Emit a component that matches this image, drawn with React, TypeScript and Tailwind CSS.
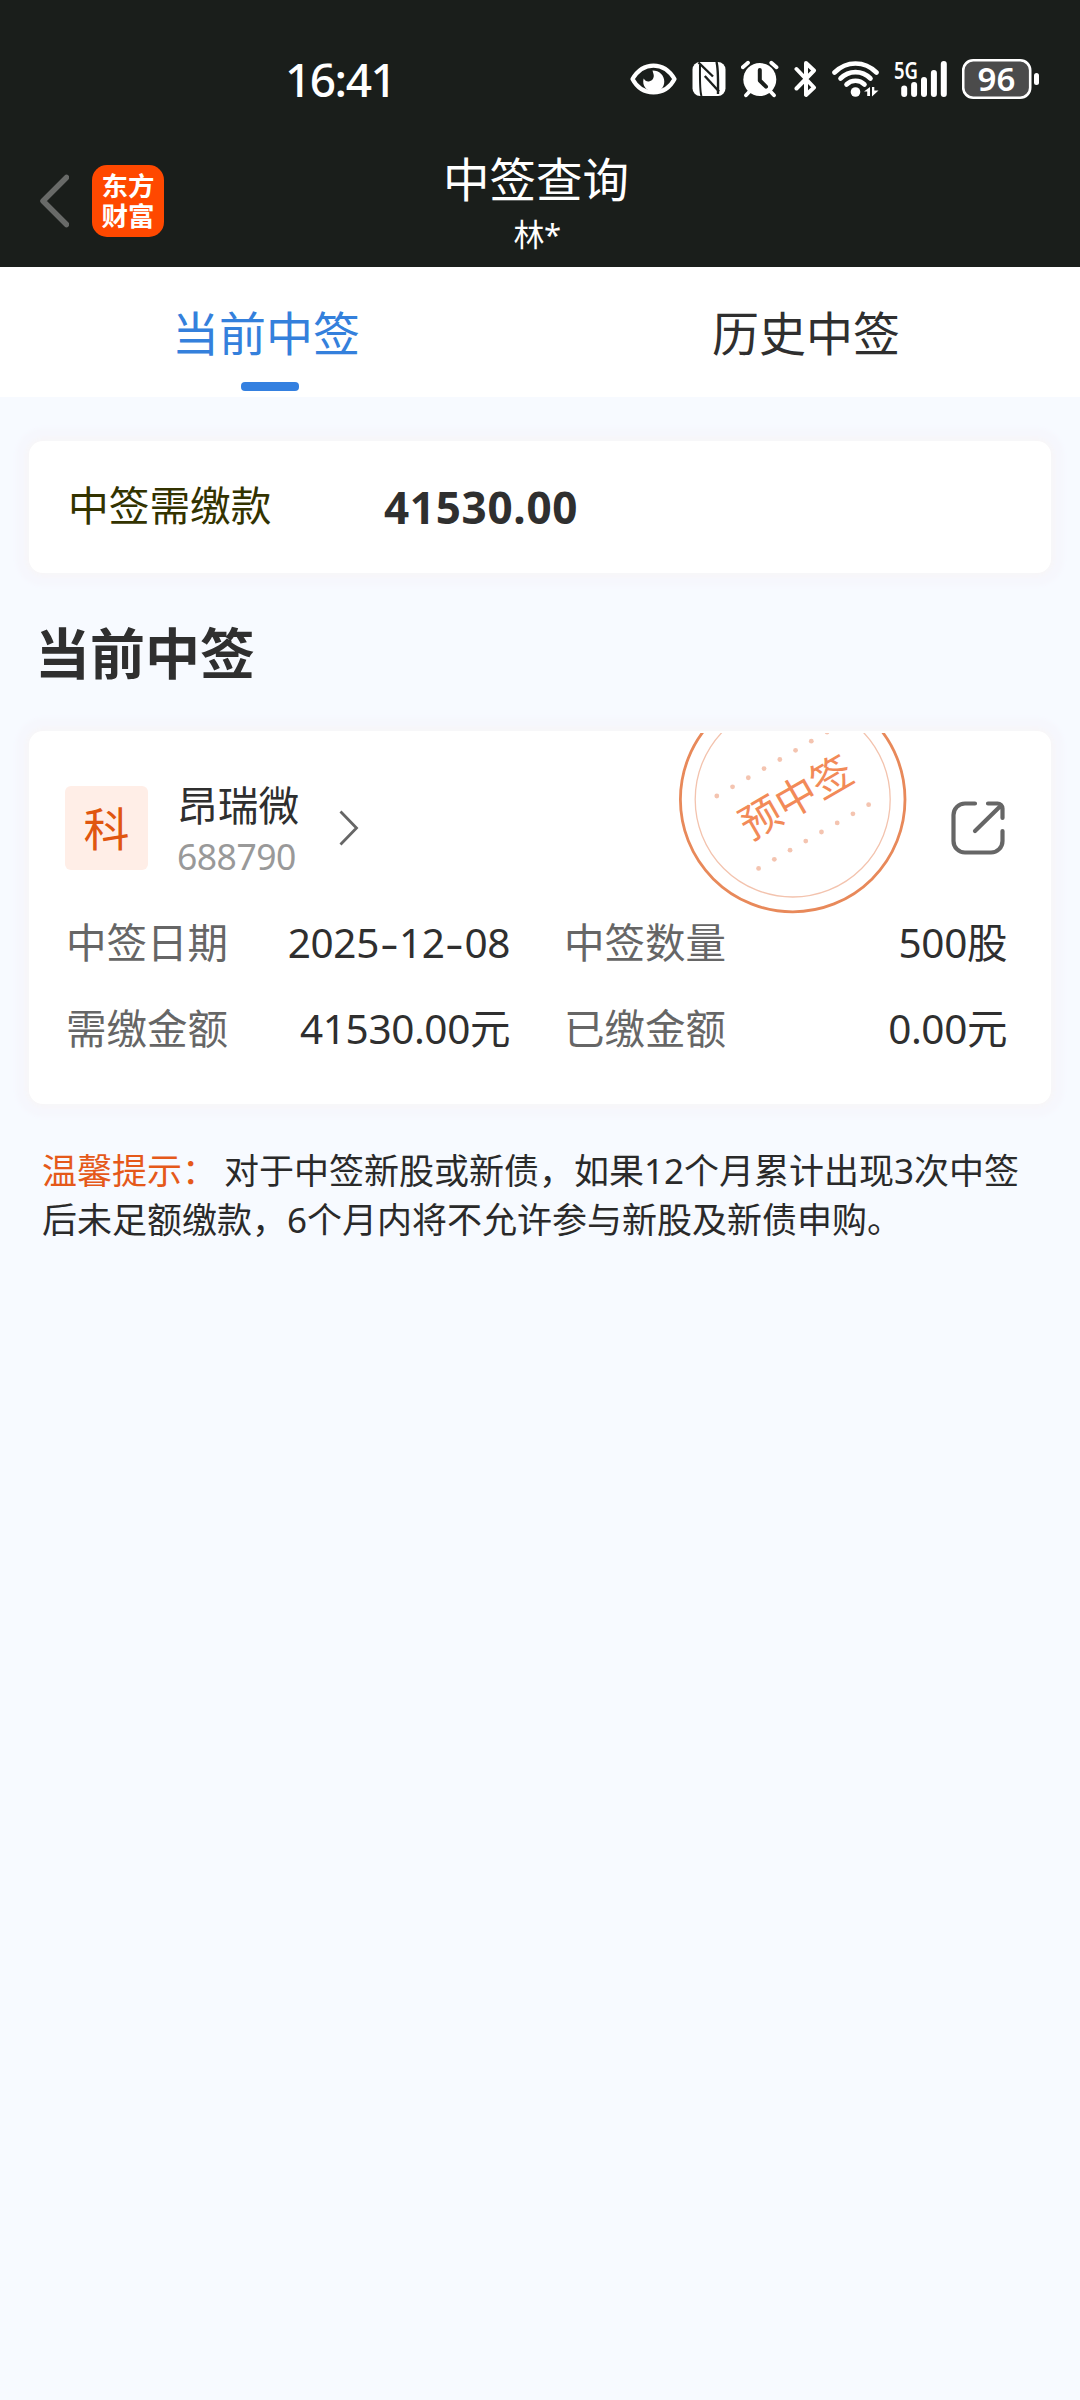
import type { ReactNode } from 'react'

const CARD = 'mx-[29px] rounded-[14px] bg-white shadow-[0_0_6px_2px_#f8f6f6,0_0_4px_13px_#f6f7fd]'

function EyeIcon() {
  return (
    <svg width="47" height="44" viewBox="0 0 48 44" fill="none">
      <path d="M2.500 22C7 14.500 14.500 8.300 24 8.300S41 14.500 45.500 22C41 30.500 33.500 35.700 24 35.700S7 30.500 2.500 22Z" stroke="#fff" strokeWidth="4.200" strokeLinejoin="round" />
      <path d="M23 13.200c7 0 12 5 12 11.300 0 6.500-4.500 10.500-10.500 10.500-6.500 0-11-4.500-11-10.500 0-1 .2-2 .5-3 1.200 2.300 3.200 3.300 5.300 3 4-.5 5.700-4.200 4.700-7.500-.3-1.500-.8-2.800-1-3.800Z" fill="#fff" />
    </svg>
  )
}

function NfcIcon() {
  return (
    <svg width="34" height="44" viewBox="0 0 34 44">
      <rect x="0.500" y="5" width="33" height="34" rx="7.500" fill="#fff" />
      <g fill="none" stroke="#1a1e1b" strokeWidth="2.400">
        <path d="M9.500 39C7.500 34 8 14 8 8" strokeWidth="2" />
        <path d="M6.500 5.500L21 19.500" />
        <path d="M12.800 19L27 34.500" />
        <path d="M24.500 5C26.500 12 26 28 26 37" />
      </g>
    </svg>
  )
}

function AlarmIcon() {
  return (
    <svg width="38" height="44" viewBox="0 0 38 44" fill="none">
      <circle cx="18.800" cy="22.500" r="16.500" fill="#fff" />
      <path d="M1.800 10.200L7 5.800M35.500 10.200L30.300 5.800M5 38.300L9 34M33 38.300L29 34" stroke="#fff" strokeWidth="3.800" strokeLinecap="round" />
      <path d="M18.800 13v10.500l6.200 6.200" stroke="#1a1e1b" strokeWidth="4" strokeLinecap="round" strokeLinejoin="round" />
    </svg>
  )
}

function BluetoothIcon() {
  return (
    <svg width="23" height="44" viewBox="0 0 23 44" fill="none">
      <path d="M2.500 12L20 30.500 12 38V6l8 7.500L2.500 31.500" stroke="#fff" strokeWidth="4" strokeLinecap="round" strokeLinejoin="round" />
    </svg>
  )
}

function WifiIcon() {
  return (
    <svg width="47" height="44" viewBox="0 0 47 44" fill="none">
      <g stroke="#fff" strokeWidth="4.600" strokeLinecap="round">
        <path d="M2.500 15.500C14.500 3.500 32.500 3.500 44.500 15.500" />
        <path d="M8.500 21.500C17 13 30 13 38.500 21.500" />
        <path d="M14.500 27.500C19.500 22.500 27.500 22.500 32.500 27.500" />
      </g>
      <circle cx="23.500" cy="35" r="4.800" fill="#fff" />
      <path d="M38 30v9h-2.800v-4.500H32L38 30ZM40 30h2.300v3.500h4.200L40 39.500V30Z" fill="#fff" />
    </svg>
  )
}

function SignalIcon() {
  const tops = [28.5, 25, 20, 13, 4]
  return (
    <svg className="overflow-visible" width="53" height="44" viewBox="0 0 53 44" fill="#fff">
      <text x="0" y="22" fontSize="23" fontWeight="600" textLength="24" lengthAdjust="spacingAndGlyphs">5G</text>
      {tops.map((y, i) => (
        <rect key={i} x={7.2 + i * 9.9} y={y} width="6" height={40 - y} rx="3" />
      ))}
    </svg>
  )
}

function BatteryIcon() {
  return (
    <svg width="77" height="44" viewBox="0 0 77 44">
      <rect x="1.200" y="3.300" width="67" height="37.400" rx="10" fill="#4b4b4b" stroke="#fff" strokeWidth="2.600" />
      <rect x="72" y="16" width="5" height="12" rx="2.500" fill="#fff" />
      <text x="34.500" y="34.200" fontSize="33" fontWeight="600" textAnchor="middle" fill="#fff">96</text>
    </svg>
  )
}

// round "预中签" stamp, the top is cut off by the card edge
function Stamp() {
  const dots = Array.from({ length: 8 }, (_, i) => i)
  return (
    <svg className="absolute left-[649px] top-[2px]" width="230" height="184" viewBox="678 733 230 184" fill="none">
      <circle cx="792.700" cy="799.500" r="112.300" stroke="#e8895a" strokeWidth="2.800" />
      <circle cx="792.700" cy="799.500" r="97.500" stroke="#f3c3ae" strokeWidth="1.300" />
      {dots.map(i => (
        <g key={i} fill="#f4c4b0">
          <circle cx={716.8 + i * 15.75} cy={796 - i * 9.13} r="2.400" />
          <circle cx={758.6 + i * 15.72} cy={868.4 - i * 9.1} r="2.400" />
        </g>
      ))}
      <text x="796.200" y="812.500" fontSize="41" textAnchor="middle" fill="#f28a58" transform="rotate(-30 795.7 797.7)">预中签</text>
    </svg>
  )
}

function ShareIcon() {
  return (
    <svg width="54" height="54" viewBox="0 0 54 54" fill="none" stroke="#666" strokeWidth="4.200" strokeLinecap="round" strokeLinejoin="round">
      <path d="M24 2.500H14A11.500 11.500 0 0 0 2.500 14v26A11.500 11.500 0 0 0 14 51.500h26A11.500 11.500 0 0 0 51.500 40V30" />
      <path d="M37 2.500h9.500a5 5 0 0 1 5 5V17M49.500 5L24 30" />
    </svg>
  )
}

function Tab({ label, active }: { label: string; active?: boolean }) {
  return (
    <div className="flex flex-1 flex-col items-center pt-[36px]">
      <span className={`-ml-[8px] text-[47px] leading-[60px] ${active ? 'text-[#3480dc]' : 'text-[#2f2f2f]'}`}>{label}</span>
      {active && <span className="mt-[19px] h-[9px] w-[58px] rounded-[4px] bg-[#3480e0]" />}
    </div>
  )
}

function Field({ label, children }: { label: string; children: ReactNode }) {
  return (
    <div className="flex items-center justify-between whitespace-nowrap text-[40.500px] leading-[50px]">
      <span className="text-[#666]">{label}</span>
      <span className="tracking-[-0.400px] text-[#2f2f2f]">{children}</span>
    </div>
  )
}

function Dash() {
  return <span className="inline-block w-[20px] scale-x-[1.400] text-center">-</span>
}

export default function App() {
  return (
    <div className="min-h-[2400px] w-[1080px] overflow-hidden bg-[#f7faff] font-['Noto_Sans','Noto_Sans_CJK_SC',sans-serif]" lang="zh-CN">
      <header className="h-[267px] bg-[#1a1e1b] pt-[57px] text-white">
        <div className="flex h-[44px] items-center justify-between pl-[285px] pr-[41px]">
          <span className="text-[46px] font-medium leading-[44px] tracking-[-1.500px]">16:41</span>
          <div className="flex items-center gap-[15px]">
            <EyeIcon />
            <NfcIcon />
            <AlarmIcon />
            <BluetoothIcon />
            <WifiIcon />
            <SignalIcon />
            <BatteryIcon />
          </div>
        </div>

        <div className="grid grid-cols-[1fr_auto_1fr] items-start pr-[8px]">
          <div className="flex items-center gap-[23px] pl-[39px] pt-[64px]">
            <svg width="30" height="54" viewBox="0 0 30 54" fill="none">
              <path d="M27.500 3.500L4 27L27.500 50.500" stroke="#686a68" strokeWidth="5.500" strokeLinecap="round" strokeLinejoin="round" />
            </svg>
            <div className="flex h-[72px] w-[72px] flex-col items-center justify-center rounded-[15px] bg-[#ff4800] text-[26.500px] font-bold leading-[30px]">
              <span>东方</span>
              <span>财富</span>
            </div>
          </div>
          <div className="flex flex-col items-center pt-[50px]">
            <h1 className="text-[46.500px] leading-[56px]">中签查询</h1>
            <p className="ml-[2px] mt-[9px] text-[31px] leading-[36px] tracking-[-0.500px]">林*</p>
          </div>
        </div>
      </header>

      <nav className="flex h-[130px] bg-white">
        <Tab label="当前中签" active />
        <Tab label="历史中签" />
      </nav>

      <section className={`${CARD} mt-[44px] flex h-[132px] items-center pl-[39px]`}>
        <span className="-mt-[2px] w-[316px] text-[40.700px] text-[#333300]">中签需缴款</span>
        <span className="text-[44px] font-bold tracking-[0.700px] text-[#2f2f2f]">41530.00</span>
      </section>

      <h2 className="ml-[35px] mt-[45px] text-[55px] font-bold leading-[70px] text-[#2f2f2f]">当前中签</h2>

      <section className={`${CARD} relative mt-[43px] h-[373px] pl-[36px] pr-[43px] pt-[55px]`}>
        <Stamp />
        <div className="flex h-[84px] items-center">
          <div className="flex h-[84px] w-[83px] items-center justify-center rounded-[6px] bg-[#ffeee7] text-[46px] text-[#e0560f]">科</div>
          <div className="ml-[29px] flex w-[122px] flex-col whitespace-nowrap pt-[5px]">
            <span className="text-[40.700px] leading-[50px] text-[#2f2f2f]">昂瑞微</span>
            <span className="text-[35.500px] leading-[52px] tracking-[-0.500px] text-[#999]">688790</span>
          </div>
          <svg className="ml-[40px]" width="20" height="36" viewBox="0 0 20 36" fill="none">
            <path d="M1.500 1.500L17.500 18L1.500 34.500" stroke="#666" strokeWidth="2.800" />
          </svg>
          <div className="ml-auto mr-[3px]">
            <ShareIcon />
          </div>
        </div>
        <div className="mt-[48px] grid grid-cols-[444px_443px] gap-x-[54px] gap-y-[36px] pl-[1px]">
          <Field label="中签日期">2025<Dash />12<Dash />08</Field>
          <Field label="中签数量">500股</Field>
          <Field label="需缴金额">41530.00元</Field>
          <Field label="已缴金额">0.00元</Field>
        </div>
      </section>

      <p className="ml-[42px] mt-[43px] w-[990px] text-[35px] leading-[48.500px] text-[#2a2a2a]">
        <span className="text-[#e5591a]">温馨提示：</span><span className="ml-[7px]">对于中签新股或新债，如果12个月累计出现3次中签后未足额缴款，6个月内将不允许参与新股及新债申购。</span>
      </p>
    </div>
  )
}
